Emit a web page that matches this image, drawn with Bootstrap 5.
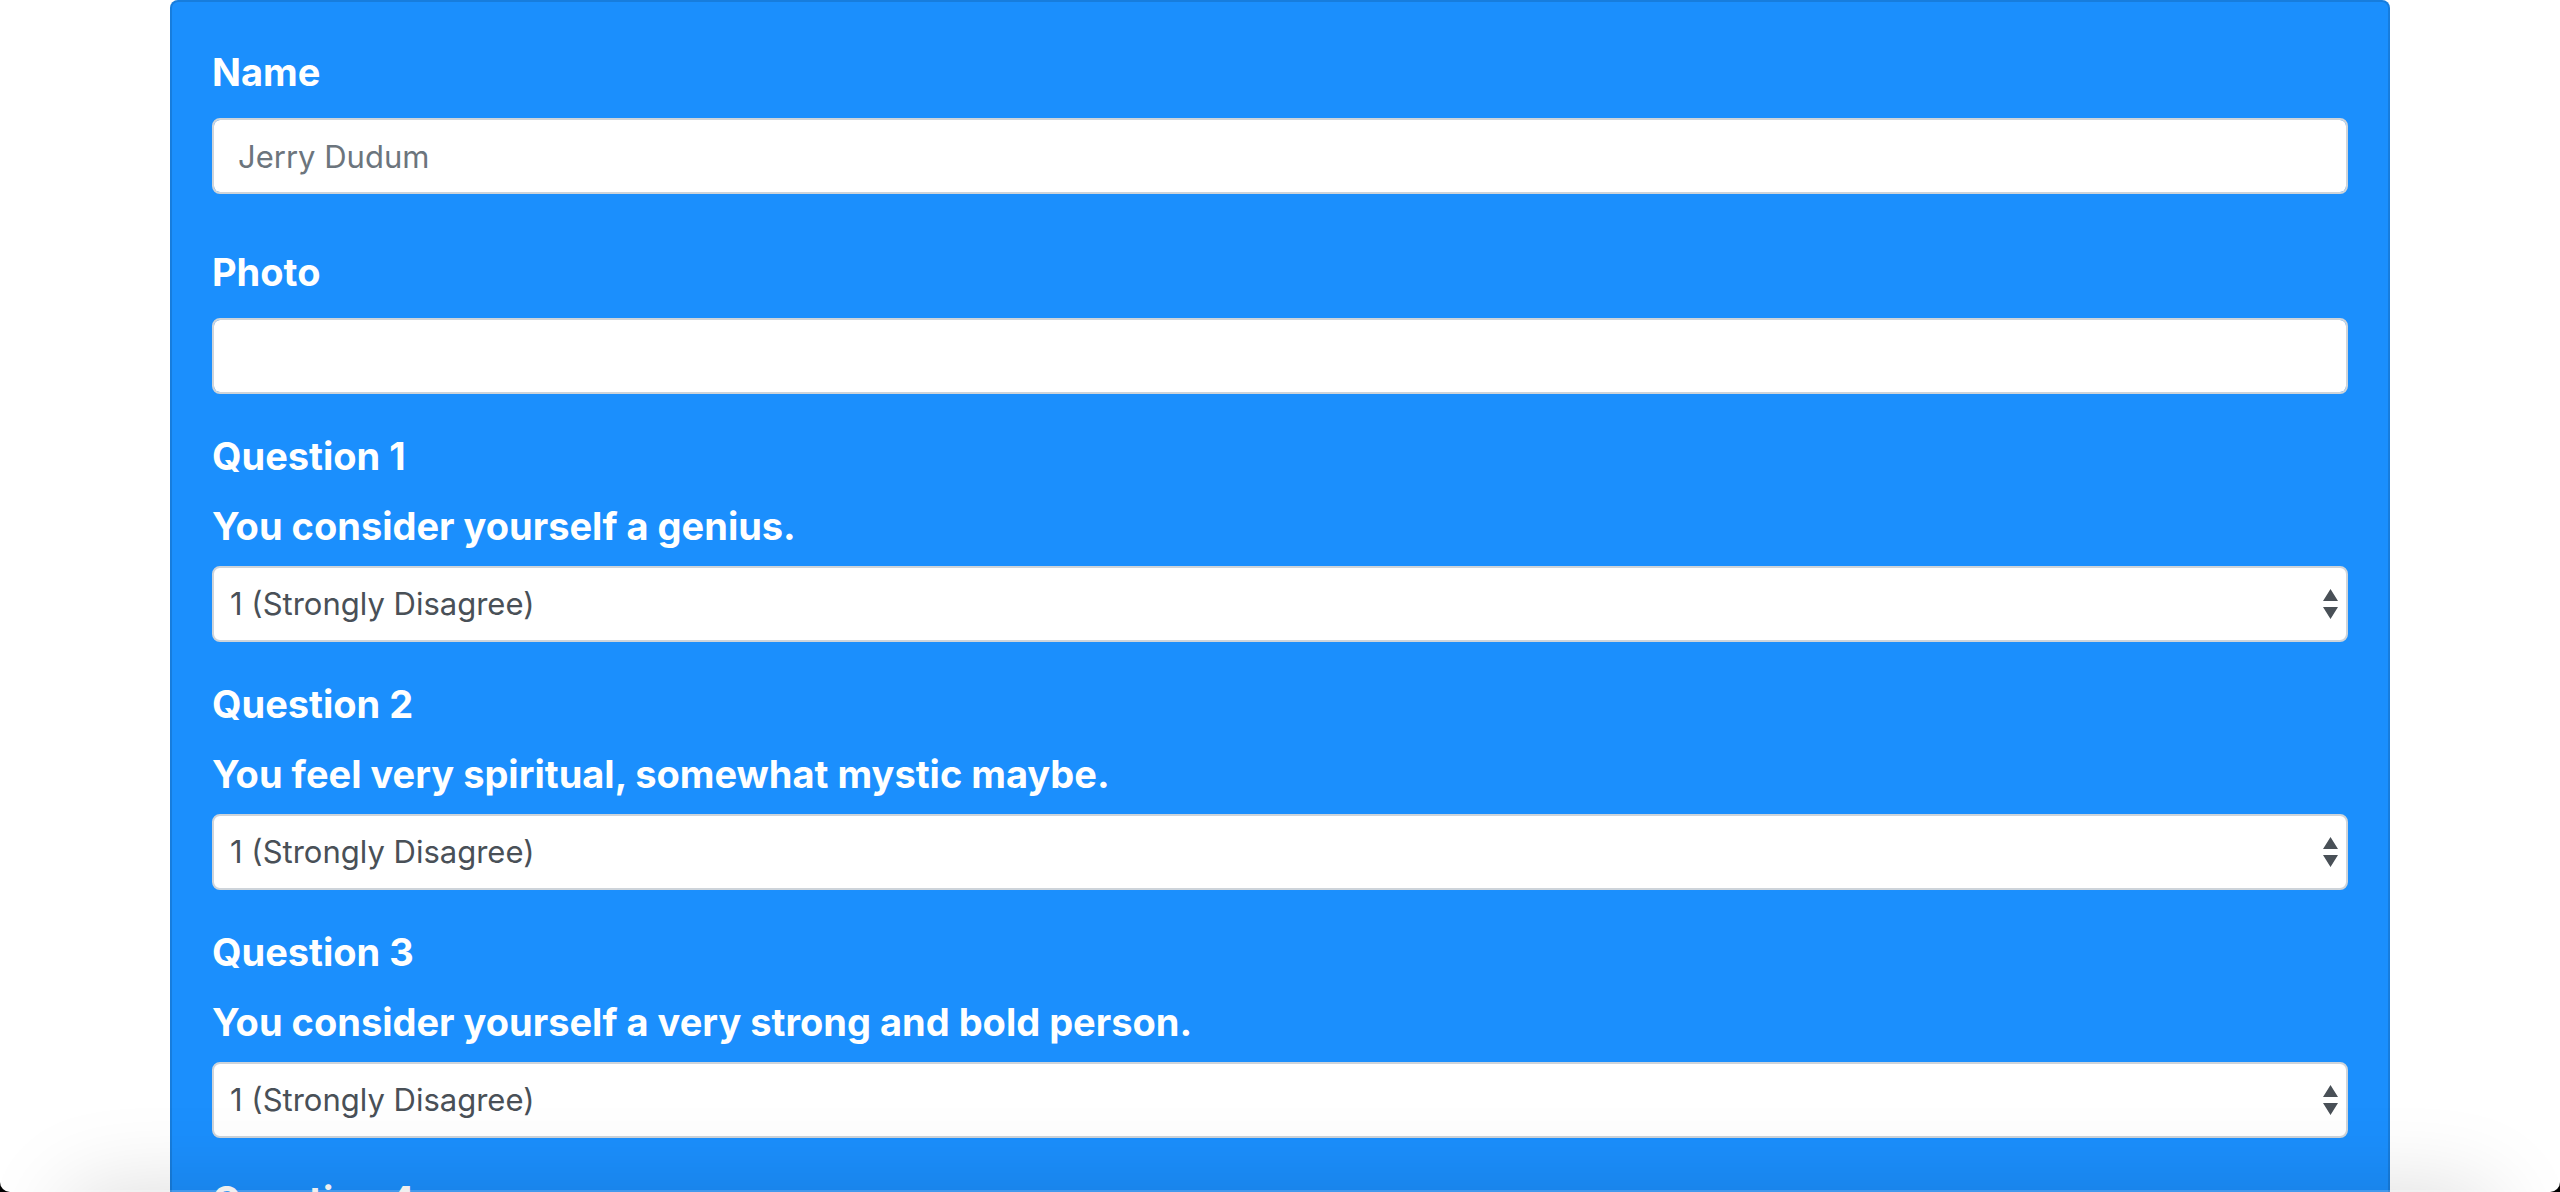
<!DOCTYPE html>
<html lang="en">
<head>
<meta charset="utf-8">
<meta name="viewport" content="width=device-width, initial-scale=1">
<title>Survey</title>
<link href="https://cdn.jsdelivr.net/npm/bootstrap@5.3.0/dist/css/bootstrap.min.css" rel="stylesheet">
<style>
body { font-family: Inter, "Liberation Sans", sans-serif; background: #fff; }
.survey-window { background: #000; }
.survey-page { background: #fff; border-radius: 0 0 10px 10px; }
.survey-container { max-width: 2280px; padding: 0 30px; }
.survey-card { background: #1b8ffd; border: 2px solid rgba(0, 0, 0, .125); border-radius: 8px; color: #fff; }
.survey-body { padding: 46px 40px; }
.survey-label { display: block; font-size: 38px; line-height: 48px; font-weight: 700; }
.text-group { margin-bottom: 54px; }
.photo-group, .question-group { margin-bottom: 38px; }
.text-group .survey-label, .photo-group .survey-label, .question-group .question-title { margin-bottom: 22px; }
.question-group .survey-label { margin-bottom: 16px; }
.question-group .question-title { margin-bottom: 22px; }
.survey-field { height: 76px; font-size: 31px; line-height: 48px; border: 2px solid #ced4da; border-radius: 8px; padding: 12px 24px; }
.survey-field::placeholder { color: #6c757d; }
.survey-select {
  color: #495057; padding: 12px 48px 12px 16px;
  background: #fff url("data:image/svg+xml,%3Csvg xmlns='http://www.w3.org/2000/svg' viewBox='0 0 4 5' preserveAspectRatio='none'%3E%3Cpath fill='%23495057' d='M2 0L0 2h4zm0 5L0 3h4z'/%3E%3C/svg%3E") no-repeat right 8px center / 15px 30px;
}
/* soft shade along the bottom edge of the window */
.edge-shade { left: 70px; right: 70px; top: 100%; height: 200px; box-shadow: 0 0 90px rgba(0, 0, 0, .15); pointer-events: none; }
.edge-line { height: 2px; background: rgba(255, 255, 255, .18); pointer-events: none; }
</style>
<script src="https://cdn.jsdelivr.net/npm/bootstrap@5.3.0/dist/js/bootstrap.bundle.min.js"></script>
</head>
<body>
<div class="survey-window vh-100">
<main class="survey-page h-100 overflow-hidden position-relative">
  <div class="container-fluid survey-container">
    <div class="card survey-card">
      <form class="card-body survey-body">
        <div class="text-group">
          <label class="survey-label" for="name">Name</label>
          <input class="form-control survey-field" type="text" id="name" placeholder="Jerry Dudum">
        </div>
        <div class="photo-group">
          <label class="survey-label" for="photo">Photo</label>
          <input class="form-control survey-field" type="text" id="photo">
        </div>
        <div class="question-group">
          <h5 class="survey-label question-title">Question 1</h5>
          <label class="survey-label" for="q1">You consider yourself a genius.</label>
          <select class="form-select survey-field survey-select" id="q1"><option>1 (Strongly Disagree)</option><option>2</option><option>3</option><option>4</option><option>5 (Strongly Agree)</option></select>
        </div>
        <div class="question-group">
          <h5 class="survey-label question-title">Question 2</h5>
          <label class="survey-label" for="q2">You feel very spiritual, somewhat mystic maybe.</label>
          <select class="form-select survey-field survey-select" id="q2"><option>1 (Strongly Disagree)</option><option>2</option><option>3</option><option>4</option><option>5 (Strongly Agree)</option></select>
        </div>
        <div class="question-group">
          <h5 class="survey-label question-title">Question 3</h5>
          <label class="survey-label" for="q3">You consider yourself a very strong and bold person.</label>
          <select class="form-select survey-field survey-select" id="q3"><option>1 (Strongly Disagree)</option><option>2</option><option>3</option><option>4</option><option>5 (Strongly Agree)</option></select>
        </div>
        <h5 class="survey-label mb-0">Question 4</h5>
      </form>
    </div>
  </div>
  <div class="edge-shade position-absolute"></div>
  <div class="edge-line position-absolute bottom-0 start-0 end-0"></div>
</main>
</div>
</body>
</html>
